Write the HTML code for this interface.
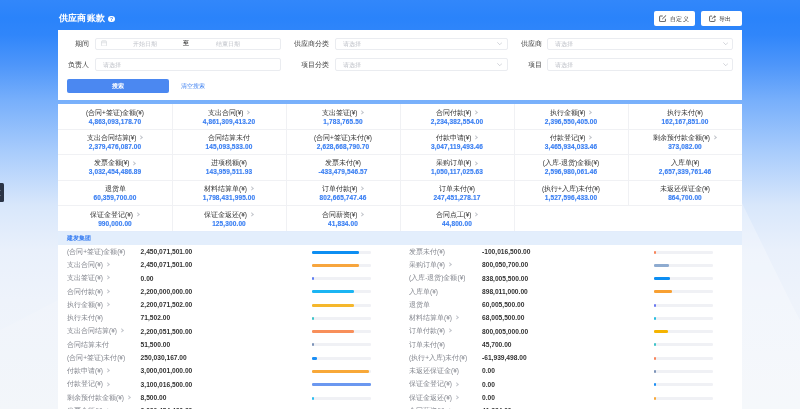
<!DOCTYPE html>
<html><head><meta charset="utf-8">
<style>
*{box-sizing:border-box;margin:0;padding:0}
html,body{width:800px;height:409px;overflow:hidden}
body{position:relative;font-family:"Liberation Sans",sans-serif;color:#333;
background:linear-gradient(180deg,#3287fa 0px,#2a83fa 18px,#3086fa 35px,#4e96fa 65px,#77affb 100px,#a7cbfc 150px,#d8e7fb 205px,#e9f0fb 250px,#eef3fb 300px,#f2f5fa 409px);}
.tab{position:absolute;left:0;top:183.1px;width:4.4px;height:19.4px;background:#2b3446;border-radius:0 1.5px 1.5px 0}
.title{position:absolute;left:58.5px;top:12.3px;font-size:9.3px;font-weight:bold;letter-spacing:0.45px;color:#fff;line-height:12px;white-space:nowrap}
.q{position:absolute;left:108.2px;top:15.7px;width:6.6px;height:6.6px;border-radius:50%;background:#fff;color:#2a7ef6;font-size:5px;font-weight:bold;text-align:center;line-height:6.8px}
.btn{position:absolute;top:10.7px;height:15.5px;width:41.4px;background:#fff;border-radius:2px;font-size:6.6px;color:#333;font-weight:500;line-height:15.5px;white-space:nowrap}
.card{position:absolute;left:58px;width:684px;background:#fff}
.lab{position:absolute;font-size:6.9px;color:#444;line-height:9px;white-space:nowrap;text-align:right}
.inp{position:absolute;height:12.5px;border:0.6px solid #eaecf0;border-radius:2px;background:#fff}
.ph{position:absolute;font-size:5.6px;color:#c0c3ca;line-height:8px;white-space:nowrap}
.dd{position:absolute}
.arr{position:absolute;width:3.5px;height:3.5px;border-right:0.6px solid #c8ccd2;border-bottom:0.6px solid #c8ccd2;transform:rotate(45deg)}
.cell{position:absolute;width:114px;height:25.4px;text-align:center}
.hl{position:absolute;left:0;width:684px;height:0.8px;background:#f0f1f4}
.vl{position:absolute;width:0.8px;background:#f0f1f4}
.cl{position:absolute;left:0;right:0;top:4px;font-size:6.5px;line-height:9px;color:#333;white-space:nowrap}
.cv{position:absolute;left:0;right:0;top:14px;-webkit-text-stroke:0.15px #3a7ff2;font-size:6.5px;letter-spacing:0.12px;line-height:8px;color:#3a7ff2;font-weight:bold;white-space:nowrap}
.chv{display:inline-block;width:3.4px;height:3.4px;border-right:0.7px solid #c3c6cc;border-top:0.7px solid #c3c6cc;transform:rotate(45deg);margin-left:2.6px;margin-right:1px;vertical-align:0.5px}
.band{position:absolute;left:58px;top:231.5px;width:684px;height:13.2px;background:#e3eefc}
.band span{position:absolute;left:9px;top:2.5px;font-size:6.3px;font-weight:bold;color:#3a7ff2;line-height:8px}
.dl{position:absolute;font-size:6.5px;line-height:8px;margin-top:-4.3px;color:#84878f;white-space:nowrap}
.dv{position:absolute;font-size:6.65px;line-height:8px;margin-top:-4px;color:#333;font-weight:bold;white-space:nowrap}
.trk{position:absolute;width:58.5px;height:2.6px;background:#f0f1f5;border-radius:1.3px}
.trk i{display:block;height:100%;border-radius:1.3px;min-width:2px}
#wrap{position:absolute;left:0;top:0;width:800px;height:409px;will-change:transform;overflow:hidden}
</style></head><body><div id="wrap">
<svg style="position:absolute;left:0;top:0" width="800" height="409"><polygon points="742,203 792,305 800,320 800,409 742,409" fill="#fff" fill-opacity="0.28"/><polygon points="0,330 58,300 58,409 0,409" fill="#fff" fill-opacity="0.12"/></svg>
<div class="tab"><i style="position:absolute;left:0;top:7px;width:1.2px;height:0.8px;background:#5a6273"></i><i style="position:absolute;left:0;top:12px;width:1.2px;height:0.8px;background:#5a6273"></i></div>
<div class="title">供应商账款</div>
<div class="q">?</div>
<div class="btn" style="left:654px"><svg style="position:absolute;left:4.8px;top:3.9px" width="8" height="7" viewBox="0 0 16 14"><path d="M7.5 2H2.2a1 1 0 0 0-1 1v9.2a1 1 0 0 0 1 1h9.6a1 1 0 0 0 1-1V7.5" fill="none" stroke="#555" stroke-width="1.9"/><path d="M6.5 8.2L14.3 0.7" fill="none" stroke="#555" stroke-width="2"/></svg><span style="position:absolute;left:15.9px;top:0.3px;font-size:6.4px;letter-spacing:0.45px">自定义</span></div>
<div class="btn" style="left:700.5px;width:41.5px"><svg style="position:absolute;left:8.8px;top:3.9px" width="7.2" height="7" viewBox="0 0 15 14"><path d="M6.5 2H2.6a1.4 1.4 0 0 0-1.4 1.4v8.4a1.4 1.4 0 0 0 1.4 1.4h8.4a1.4 1.4 0 0 0 1.4-1.4V8" fill="none" stroke="#555" stroke-width="1.9"/><path d="M6.6 8.4C7 5 9.5 3.2 13 3.2" fill="none" stroke="#555" stroke-width="1.8"/><path d="M11.2 0.6L14 3.2 11.2 5.8" fill="#555" stroke="#555" stroke-width="1"/></svg><span style="position:absolute;left:18.3px;top:0.3px;font-size:6.4px;letter-spacing:0.45px">导出</span></div>

<div class="card" style="top:30px;height:70px">
  <div class="lab" style="right:653px;top:8.8px">期间</div>
  <div class="inp" style="left:37px;top:7.5px;width:186px"></div>
  <svg style="position:absolute;left:43px;top:9.8px" width="6" height="6.5" viewBox="0 0 12 13"><rect x="1" y="2" width="10" height="10" rx="1" fill="none" stroke="#d0d3d9" stroke-width="1.2"/><path d="M1 5.5h10M4 0.5v3M8 0.5v3" stroke="#d0d3d9" stroke-width="1.2"/></svg>
  <div class="ph" style="left:75px;top:10px">开始日期</div>
  <div class="lab" style="left:125.3px;top:9.2px;font-size:5.9px;font-weight:bold;color:#444">至</div>
  <div class="ph" style="left:158px;top:10px">结束日期</div>
  <div class="lab" style="right:413px;top:8.8px">供应商分类</div>
  <div class="inp" style="left:277px;top:7.5px;width:172.5px"></div>
  <div class="ph" style="left:285px;top:10px">请选择</div>
  <svg class="dd" style="left:438.8px;top:12.3px" width="5.5" height="3.2" viewBox="0 0 11 6.4"><path d="M0.6 0.6L5.5 5.5 10.4 0.6" fill="none" stroke="#bcc0c7" stroke-width="1.3"/></svg>
  <div class="lab" style="right:200px;top:8.8px">供应商</div>
  <div class="inp" style="left:489.2px;top:7.5px;width:186px"></div>
  <div class="ph" style="left:497px;top:10px">请选择</div>
  <svg class="dd" style="left:664.8px;top:12.3px" width="5.5" height="3.2" viewBox="0 0 11 6.4"><path d="M0.6 0.6L5.5 5.5 10.4 0.6" fill="none" stroke="#bcc0c7" stroke-width="1.3"/></svg>

  <div class="lab" style="right:653px;top:29.6px">负责人</div>
  <div class="inp" style="left:37px;top:28.3px;width:186px"></div>
  <div class="ph" style="left:45px;top:31px">请选择</div>
  <div class="lab" style="right:413px;top:29.6px">项目分类</div>
  <div class="inp" style="left:277px;top:28.3px;width:172.5px"></div>
  <div class="ph" style="left:285px;top:31px">请选择</div>
  <svg class="dd" style="left:438.8px;top:33.1px" width="5.5" height="3.2" viewBox="0 0 11 6.4"><path d="M0.6 0.6L5.5 5.5 10.4 0.6" fill="none" stroke="#bcc0c7" stroke-width="1.3"/></svg>
  <div class="lab" style="right:200px;top:29.6px">项目</div>
  <div class="inp" style="left:489.2px;top:28.3px;width:186px"></div>
  <div class="ph" style="left:497px;top:31px">请选择</div>
  <svg class="dd" style="left:664.8px;top:33.1px" width="5.5" height="3.2" viewBox="0 0 11 6.4"><path d="M0.6 0.6L5.5 5.5 10.4 0.6" fill="none" stroke="#bcc0c7" stroke-width="1.3"/></svg>

  <div style="position:absolute;left:8.75px;top:48.75px;width:101.75px;height:14.25px;background:#4b88f1;border-radius:2px;color:#fff;font-size:6.3px;font-weight:bold;text-align:center;line-height:14.25px">搜索</div>
  <div style="position:absolute;left:122.5px;top:51.5px;font-size:6px;color:#3b7ff1;font-weight:500;line-height:8px">清空搜索</div>
</div>

<div class="card" style="top:103.8px;height:127.7px;overflow:hidden">
<div class="hl" style="top:24.95px"></div><div class="hl" style="top:50.20px"></div><div class="hl" style="top:76.10px"></div><div class="hl" style="top:101.55px"></div><div class="vl" style="left:114.3px;top:0.00px;height:25.35px"></div><div class="vl" style="left:228.3px;top:0.00px;height:25.35px"></div><div class="vl" style="left:342.3px;top:0.00px;height:25.35px"></div><div class="vl" style="left:456.3px;top:0.00px;height:25.35px"></div><div class="vl" style="left:570.3px;top:0.00px;height:25.35px"></div><div class="vl" style="left:114.3px;top:25.35px;height:25.25px"></div><div class="vl" style="left:228.3px;top:25.35px;height:25.25px"></div><div class="vl" style="left:342.3px;top:25.35px;height:25.25px"></div><div class="vl" style="left:456.3px;top:25.35px;height:25.25px"></div><div class="vl" style="left:570.3px;top:25.35px;height:25.25px"></div><div class="vl" style="left:114.3px;top:50.60px;height:25.90px"></div><div class="vl" style="left:228.3px;top:50.60px;height:25.90px"></div><div class="vl" style="left:342.3px;top:50.60px;height:25.90px"></div><div class="vl" style="left:456.3px;top:50.60px;height:25.90px"></div><div class="vl" style="left:570.3px;top:50.60px;height:25.90px"></div><div class="vl" style="left:114.3px;top:76.50px;height:25.45px"></div><div class="vl" style="left:228.3px;top:76.50px;height:25.45px"></div><div class="vl" style="left:342.3px;top:76.50px;height:25.45px"></div><div class="vl" style="left:456.3px;top:76.50px;height:25.45px"></div><div class="vl" style="left:570.3px;top:76.50px;height:25.45px"></div><div class="vl" style="left:114.3px;top:101.95px;height:25.75px"></div><div class="vl" style="left:228.3px;top:101.95px;height:25.75px"></div><div class="vl" style="left:342.3px;top:101.95px;height:25.75px"></div><div class="vl" style="left:456.3px;top:101.95px;height:25.75px"></div><div class="cell" style="left:0px;top:0px"><div class="cl">(合同+签证)金额(¥)</div><div class="cv">4,863,093,178.70</div></div><div class="cell" style="left:114px;top:0px"><div class="cl">支出合同(¥)<span class="chv"></span></div><div class="cv">4,861,309,413.20</div></div><div class="cell" style="left:228px;top:0px"><div class="cl">支出签证(¥)<span class="chv"></span></div><div class="cv">1,783,765.50</div></div><div class="cell" style="left:342px;top:0px"><div class="cl">合同付款(¥)<span class="chv"></span></div><div class="cv">2,234,382,554.00</div></div><div class="cell" style="left:456px;top:0px"><div class="cl">执行金额(¥)<span class="chv"></span></div><div class="cv">2,396,550,405.00</div></div><div class="cell" style="left:570px;top:0px"><div class="cl">执行未付(¥)</div><div class="cv">162,167,851.00</div></div><div class="cell" style="left:0px;top:25.35px"><div class="cl">支出合同结算(¥)<span class="chv"></span></div><div class="cv">2,379,476,087.00</div></div><div class="cell" style="left:114px;top:25.35px"><div class="cl">合同结算未付</div><div class="cv">145,093,533.00</div></div><div class="cell" style="left:228px;top:25.35px"><div class="cl">(合同+签证)未付(¥)</div><div class="cv">2,628,668,790.70</div></div><div class="cell" style="left:342px;top:25.35px"><div class="cl">付款申请(¥)<span class="chv"></span></div><div class="cv">3,047,119,493.46</div></div><div class="cell" style="left:456px;top:25.35px"><div class="cl">付款登记(¥)<span class="chv"></span></div><div class="cv">3,465,934,033.46</div></div><div class="cell" style="left:570px;top:25.35px"><div class="cl">剩余预付款金额(¥)<span class="chv"></span></div><div class="cv">373,082.00</div></div><div class="cell" style="left:0px;top:50.6px"><div class="cl">发票金额(¥)<span class="chv"></span></div><div class="cv">3,032,454,486.89</div></div><div class="cell" style="left:114px;top:50.6px"><div class="cl">进项税额(¥)</div><div class="cv">143,959,511.93</div></div><div class="cell" style="left:228px;top:50.6px"><div class="cl">发票未付(¥)</div><div class="cv">-433,479,546.57</div></div><div class="cell" style="left:342px;top:50.6px"><div class="cl">采购订单(¥)<span class="chv"></span></div><div class="cv">1,050,117,025.63</div></div><div class="cell" style="left:456px;top:50.6px"><div class="cl">(入库-退货)金额(¥)</div><div class="cv">2,596,980,061.46</div></div><div class="cell" style="left:570px;top:50.6px"><div class="cl">入库单(¥)</div><div class="cv">2,657,339,761.46</div></div><div class="cell" style="left:0px;top:76.5px"><div class="cl">退货单</div><div class="cv">60,359,700.00</div></div><div class="cell" style="left:114px;top:76.5px"><div class="cl">材料结算单(¥)<span class="chv"></span></div><div class="cv">1,798,431,995.00</div></div><div class="cell" style="left:228px;top:76.5px"><div class="cl">订单付款(¥)<span class="chv"></span></div><div class="cv">802,665,747.46</div></div><div class="cell" style="left:342px;top:76.5px"><div class="cl">订单未付(¥)</div><div class="cv">247,451,278.17</div></div><div class="cell" style="left:456px;top:76.5px"><div class="cl">(执行+入库)未付(¥)</div><div class="cv">1,527,596,433.00</div></div><div class="cell" style="left:570px;top:76.5px"><div class="cl">未返还保证金(¥)</div><div class="cv">864,700.00</div></div><div class="cell" style="left:0px;top:101.95px"><div class="cl">保证金登记(¥)<span class="chv"></span></div><div class="cv">990,000.00</div></div><div class="cell" style="left:114px;top:101.95px"><div class="cl">保证金返还(¥)<span class="chv"></span></div><div class="cv">125,300.00</div></div><div class="cell" style="left:228px;top:101.95px"><div class="cl">合同薪资(¥)<span class="chv"></span></div><div class="cv">41,834.00</div></div><div class="cell" style="left:342px;top:101.95px"><div class="cl">合同点工(¥)<span class="chv"></span></div><div class="cv">44,800.00</div></div>
</div>
<div class="band"><span>建发集团</span></div>
<div class="card" style="top:244.7px;height:170px">
<div class="dl" style="left:9px;top:7.30px">(合同+签证)金额(¥)</div><div class="dv" style="left:82.6px;top:7.30px">2,450,071,501.00</div><div class="trk" style="left:254px;top:6.30px"><i style="width:80%;background:#0d8ef2"></i></div><div class="dl" style="left:9px;top:20.57px">支出合同(¥)<span class="chv"></span></div><div class="dv" style="left:82.6px;top:20.57px">2,450,071,501.00</div><div class="trk" style="left:254px;top:19.30px"><i style="width:80%;background:#f7a53d"></i></div><div class="dl" style="left:9px;top:33.84px">支出签证(¥)<span class="chv"></span></div><div class="dv" style="left:82.6px;top:33.84px">0.00</div><div class="trk" style="left:254px;top:32.30px"><i style="width:2%;background:#5f7ef2"></i></div><div class="dl" style="left:9px;top:47.11px">合同付款(¥)<span class="chv"></span></div><div class="dv" style="left:82.6px;top:47.11px">2,200,000,000.00</div><div class="trk" style="left:254px;top:45.30px"><i style="width:71%;background:#1bb5f3"></i></div><div class="dl" style="left:9px;top:60.38px">执行金额(¥)<span class="chv"></span></div><div class="dv" style="left:82.6px;top:60.38px">2,200,071,502.00</div><div class="trk" style="left:254px;top:59.30px"><i style="width:71%;background:#f5b72c"></i></div><div class="dl" style="left:9px;top:73.65px">执行未付(¥)</div><div class="dv" style="left:82.6px;top:73.65px">71,502.00</div><div class="trk" style="left:254px;top:72.30px"><i style="width:2%;background:#3ec3c9"></i></div><div class="dl" style="left:9px;top:86.92px">支出合同结算(¥)<span class="chv"></span></div><div class="dv" style="left:82.6px;top:86.92px">2,200,051,500.00</div><div class="trk" style="left:254px;top:85.30px"><i style="width:71%;background:#f88f5a"></i></div><div class="dl" style="left:9px;top:100.19px">合同结算未付</div><div class="dv" style="left:82.6px;top:100.19px">51,500.00</div><div class="trk" style="left:254px;top:98.30px"><i style="width:2%;background:#7d93b8"></i></div><div class="dl" style="left:9px;top:113.46px">(合同+签证)未付(¥)</div><div class="dv" style="left:82.6px;top:113.46px">250,030,167.00</div><div class="trk" style="left:254px;top:112.30px"><i style="width:8%;background:#1a8ef5"></i></div><div class="dl" style="left:9px;top:126.73px">付款申请(¥)<span class="chv"></span></div><div class="dv" style="left:82.6px;top:126.73px">3,000,001,000.00</div><div class="trk" style="left:254px;top:125.30px"><i style="width:98%;background:#f8a838"></i></div><div class="dl" style="left:9px;top:140.00px">付款登记(¥)<span class="chv"></span></div><div class="dv" style="left:82.6px;top:140.00px">3,100,016,500.00</div><div class="trk" style="left:254px;top:138.30px"><i style="width:100%;background:#6b98f0"></i></div><div class="dl" style="left:9px;top:153.27px">剩余预付款金额(¥)<span class="chv"></span></div><div class="dv" style="left:82.6px;top:153.27px">8,500.00</div><div class="trk" style="left:254px;top:152.30px"><i style="width:2%;background:#2bbcf0"></i></div><div class="dl" style="left:9px;top:166.54px">发票金额(¥)<span class="chv"></span></div><div class="dv" style="left:82.6px;top:166.54px">3,032,454,486.89</div><div class="trk" style="left:254px;top:165.30px"><i style="width:50%;background:#f5b72c"></i></div><div class="dl" style="left:351px;top:7.30px">发票未付(¥)</div><div class="dv" style="left:424px;top:7.30px">-100,016,500.00</div><div class="trk" style="left:596px;top:6.30px"><i style="width:2%;background:#f8845a"></i></div><div class="dl" style="left:351px;top:20.57px">采购订单(¥)<span class="chv"></span></div><div class="dv" style="left:424px;top:20.57px">800,050,700.00</div><div class="trk" style="left:596px;top:19.30px"><i style="width:26%;background:#8eabd0"></i></div><div class="dl" style="left:351px;top:33.84px">(入库-退货)金额(¥)</div><div class="dv" style="left:424px;top:33.84px">838,005,500.00</div><div class="trk" style="left:596px;top:32.30px"><i style="width:28%;background:#0d8ef2"></i></div><div class="dl" style="left:351px;top:47.11px">入库单(¥)</div><div class="dv" style="left:424px;top:47.11px">898,011,000.00</div><div class="trk" style="left:596px;top:45.30px"><i style="width:30%;background:#f8a032"></i></div><div class="dl" style="left:351px;top:60.38px">退货单</div><div class="dv" style="left:424px;top:60.38px">60,005,500.00</div><div class="trk" style="left:596px;top:59.30px"><i style="width:2%;background:#6a78f0"></i></div><div class="dl" style="left:351px;top:73.65px">材料结算单(¥)<span class="chv"></span></div><div class="dv" style="left:424px;top:73.65px">68,005,500.00</div><div class="trk" style="left:596px;top:72.30px"><i style="width:2%;background:#28bde0"></i></div><div class="dl" style="left:351px;top:86.92px">订单付款(¥)<span class="chv"></span></div><div class="dv" style="left:424px;top:86.92px">800,005,000.00</div><div class="trk" style="left:596px;top:85.30px"><i style="width:24%;background:#f5b400"></i></div><div class="dl" style="left:351px;top:100.19px">订单未付(¥)</div><div class="dv" style="left:424px;top:100.19px">45,700.00</div><div class="trk" style="left:596px;top:98.30px"><i style="width:2%;background:#3ec3c9"></i></div><div class="dl" style="left:351px;top:113.46px">(执行+入库)未付(¥)</div><div class="dv" style="left:424px;top:113.46px">-61,939,498.00</div><div class="trk" style="left:596px;top:112.30px"><i style="width:2%;background:#f8845a"></i></div><div class="dl" style="left:351px;top:126.73px">未返还保证金(¥)</div><div class="dv" style="left:424px;top:126.73px">0.00</div><div class="trk" style="left:596px;top:125.30px"><i style="width:2%;background:#7d93b8"></i></div><div class="dl" style="left:351px;top:140.00px">保证金登记(¥)<span class="chv"></span></div><div class="dv" style="left:424px;top:140.00px">0.00</div><div class="trk" style="left:596px;top:138.30px"><i style="width:2%;background:#1a8ef5"></i></div><div class="dl" style="left:351px;top:153.27px">保证金返还(¥)<span class="chv"></span></div><div class="dv" style="left:424px;top:153.27px">0.00</div><div class="trk" style="left:596px;top:152.30px"><i style="width:2%;background:#f8a838"></i></div><div class="dl" style="left:351px;top:166.54px">合同薪资(¥)<span class="chv"></span></div><div class="dv" style="left:424px;top:166.54px">41,834.00</div><div class="trk" style="left:596px;top:165.30px"><i style="width:2%;background:#6b98f0"></i></div>
</div>
</div></body></html>
